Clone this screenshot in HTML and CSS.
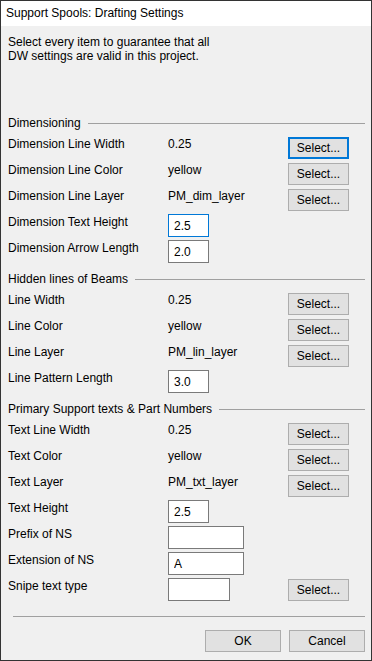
FILE: index.html
```html
<!DOCTYPE html>
<html lang="en">
<head>
    <meta charset="UTF-8">
    <meta name="viewport" content="width=device-width, initial-scale=1.0">
    <title>Support Spools: Drafting Settings</title>
    <link rel="stylesheet" href="styles.css">
</head>
<body>
    <div class="dialogo">
        <div class="titulo">Support Spools: Drafting Settings</div>

        <div class="cuerpo">
            <p class="intro">Select every item to guarantee that all<br>DW settings are valid in this project.</p>

            <div class="grupo">
                <div class="grupo-titulo"><span>Dimensioning</span></div>
                <div class="fila"><span>Dimension Line Width</span><span>0.25</span><button class="boton activo">Select...</button></div>
                <div class="fila"><span>Dimension Line Color</span><span>yellow</span><button class="boton">Select...</button></div>
                <div class="fila"><span>Dimension Line Layer</span><span>PM_dim_layer</span><button class="boton">Select...</button></div>
                <div class="fila"><span>Dimension Text Height</span><input class="campo corto activo" value="2.5"></div>
                <div class="fila"><span>Dimension Arrow Length</span><input class="campo corto" value="2.0"></div>
            </div>

            <div class="grupo">
                <div class="grupo-titulo"><span>Hidden lines of Beams</span></div>
                <div class="fila"><span>Line Width</span><span>0.25</span><button class="boton">Select...</button></div>
                <div class="fila"><span>Line Color</span><span>yellow</span><button class="boton">Select...</button></div>
                <div class="fila"><span>Line Layer</span><span>PM_lin_layer</span><button class="boton">Select...</button></div>
                <div class="fila"><span>Line Pattern Length</span><input class="campo corto" value="3.0"></div>
            </div>

            <div class="grupo">
                <div class="grupo-titulo"><span>Primary Support texts &amp; Part Numbers</span></div>
                <div class="fila"><span>Text Line Width</span><span>0.25</span><button class="boton">Select...</button></div>
                <div class="fila"><span>Text Color</span><span>yellow</span><button class="boton">Select...</button></div>
                <div class="fila"><span>Text Layer</span><span>PM_txt_layer</span><button class="boton">Select...</button></div>
                <div class="fila"><span>Text Height</span><input class="campo corto" value="2.5"></div>
                <div class="fila"><span>Prefix of NS</span><input class="campo largo" value=""></div>
                <div class="fila"><span>Extension of NS</span><input class="campo largo" value="A"></div>
                <div class="fila"><span>Snipe text type</span><input class="campo medio" value=""><button class="boton">Select...</button></div>
            </div>
        </div>

        <div class="pie">
            <div class="separador"></div>
            <div class="acciones">
                <button class="boton ancho">OK</button>
                <button class="boton ancho">Cancel</button>
            </div>
        </div>
    </div>
</body>
</html>
```

FILE: styles.css
```css
body {
    margin: 0;
    font-family: 'Liberation Sans', Arial, sans-serif;
    font-size: 12px;
    color: black;
    background-color: white;
}

.dialogo {
    width: 372px;
    height: 661px;
    box-sizing: border-box;
    border: 1px solid #333;
    background-color: #f0f0f0;
    display: flex;
    flex-direction: column;
}

.titulo {
    height: 25px;
    line-height: 25px;
    padding-left: 5px;
    background-color: white;
}

.cuerpo {
    padding: 0 6px 0 7px;
}

.intro {
    margin: 9px 0 47px;
    line-height: 14px;
}

.grupo-titulo {
    height: 26px;
    display: flex;
    align-items: center;
}

.grupo-titulo::after {
    content: "";
    flex: 1;
    height: 1px;
    margin-left: 7px;
    background-color: #a0a0a0;
}

.fila {
    height: 26px;
    display: grid;
    grid-template-columns: 160px 120px 61px;
    align-items: start;
    line-height: 16px;
}

.fila > span {
    padding-top: 0;
}

.boton {
    height: 22px;
    margin-top: 1px;
    padding: 0;
    font-family: inherit;
    font-size: 12px;
    color: black;
    background-color: #e1e1e1;
    border: 1px solid #adadad;
    border-radius: 0;
}

.boton.activo {
    border: 2px solid #0078d7;
}

.fila .boton {
    grid-column: 3;
}

.campo {
    height: 23px;
    box-sizing: border-box;
    margin: 0;
    padding: 0 5px;
    font-family: inherit;
    font-size: 12px;
    color: black;
    background-color: white;
    border: 1px solid #7a7a7a;
    border-radius: 0;
    outline: none;
}

.campo.activo {
    border-color: #0078d7;
}

.corto {
    width: 41px;
}

.medio {
    width: 62px;
}

.largo {
    width: 76px;
}

.pie {
    margin-top: 12px;
    padding: 0 6px 0 12px;
}

.separador {
    height: 1px;
    background-color: #a0a0a0;
}

.acciones {
    display: flex;
    justify-content: flex-end;
    gap: 8px;
    margin-top: 13px;
}

.boton.ancho {
    width: 76px;
    margin-top: 0;
}
```
